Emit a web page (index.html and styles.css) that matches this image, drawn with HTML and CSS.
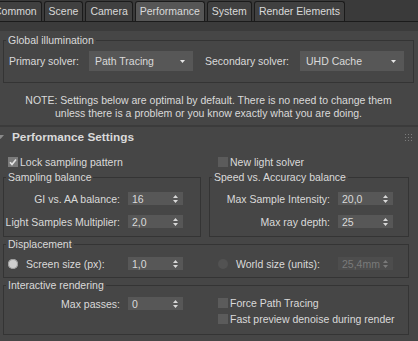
FILE: index.html
```html
<!DOCTYPE html>
<html lang="en">
<head>
  <meta charset="UTF-8" />
  <meta name="viewport" content="width=device-width, initial-scale=1.0"/>
  <title>Render Setup - Performance</title>
  <link rel="stylesheet" href="styles.css">
</head>
<body>
  <div class="tabs">
    <div class="tab">Common</div>
    <div class="tab">Scene</div>
    <div class="tab">Camera</div>
    <div class="tab active">Performance</div>
    <div class="tab">System</div>
    <div class="tab">Render Elements</div>
  </div>

  <div class="panel">
    <div class="rollout top">
      <fieldset class="group gi">
        <legend>Global illumination</legend>
        <div class="solvers">
          <span>Primary solver:</span>
          <div class="dropdown">Path Tracing
            <svg width="5" height="3" viewBox="0 0 5 3"><path d="M0 0h5L2.5 3z" fill="#e6e6e6"/></svg>
          </div>
          <span class="second">Secondary solver:</span>
          <div class="dropdown">UHD Cache
            <svg width="5" height="3" viewBox="0 0 5 3"><path d="M0 0h5L2.5 3z" fill="#e6e6e6"/></svg>
          </div>
        </div>
      </fieldset>
      <p class="note">NOTE: Settings below are optimal by default. There is no need to change them<br>unless there is a problem or you know exactly what you are doing.</p>
    </div>

    <div class="rollout">
      <div class="rollout-head">
        <svg class="caret" width="7" height="4" viewBox="0 0 7 4"><path d="M0 0h7L3.5 4z" fill="#8a8a8a"/></svg>
        <span class="title">Performance Settings</span>
        <svg class="grip" width="7" height="7" viewBox="0 0 7 7" fill="#7c7c7c">
          <rect x="0" y="0" width="1" height="1"/><rect x="3" y="0" width="1" height="1"/><rect x="6" y="0" width="1" height="1"/>
          <rect x="0" y="3" width="1" height="1"/><rect x="3" y="3" width="1" height="1"/><rect x="6" y="3" width="1" height="1"/>
          <rect x="0" y="6" width="1" height="1"/><rect x="3" y="6" width="1" height="1"/><rect x="6" y="6" width="1" height="1"/>
        </svg>
      </div>

      <div class="body">
        <div class="halves checks">
          <label class="check on"><span class="box"><svg width="10" height="10" viewBox="0 0 10 10"><path d="M2 5.2l2 2.2 4-5" fill="none" stroke="#e4e4e4" stroke-width="1.6"/></svg></span>Lock sampling pattern</label>
          <label class="check"><span class="box"></span>New light solver</label>
        </div>

        <div class="pair">
          <fieldset class="group">
            <legend>Sampling balance</legend>
            <div class="fields">
              <span class="lbl">GI vs. AA balance:</span>
              <div class="spinner">16<svg width="5" height="8" viewBox="0 0 5 8"><path d="M0 3L2.5 0 5 3zM0 5h5L2.5 8z" fill="#d8d8d8"/></svg></div>
              <span class="lbl">Light Samples Multiplier:</span>
              <div class="spinner">2,0<svg width="5" height="8" viewBox="0 0 5 8"><path d="M0 3L2.5 0 5 3zM0 5h5L2.5 8z" fill="#d8d8d8"/></svg></div>
            </div>
          </fieldset>
          <fieldset class="group">
            <legend>Speed vs. Accuracy balance</legend>
            <div class="fields wide">
              <span class="lbl">Max Sample Intensity:</span>
              <div class="spinner">20,0<svg width="5" height="8" viewBox="0 0 5 8"><path d="M0 3L2.5 0 5 3zM0 5h5L2.5 8z" fill="#d8d8d8"/></svg></div>
              <span class="lbl">Max ray depth:</span>
              <div class="spinner">25<svg width="5" height="8" viewBox="0 0 5 8"><path d="M0 3L2.5 0 5 3zM0 5h5L2.5 8z" fill="#d8d8d8"/></svg></div>
            </div>
          </fieldset>
        </div>

        <fieldset class="group disp">
          <legend>Displacement</legend>
          <div class="halves">
            <div class="radio-row">
              <label class="radio on"><span class="dot"></span>Screen size (px):</label>
              <div class="spinner">1,0<svg width="5" height="8" viewBox="0 0 5 8"><path d="M0 3L2.5 0 5 3zM0 5h5L2.5 8z" fill="#d8d8d8"/></svg></div>
            </div>
            <div class="radio-row">
              <label class="radio"><span class="dot"></span>World size (units):</label>
              <div class="spinner off">25,4mm<svg width="5" height="8" viewBox="0 0 5 8"><path d="M0 3L2.5 0 5 3zM0 5h5L2.5 8z" fill="#7a7a7a"/></svg></div>
            </div>
          </div>
        </fieldset>

        <fieldset class="group inter">
          <legend>Interactive rendering</legend>
          <div class="halves">
            <div class="fields">
              <span class="lbl">Max passes:</span>
              <div class="spinner">0<svg width="5" height="8" viewBox="0 0 5 8"><path d="M0 3L2.5 0 5 3zM0 5h5L2.5 8z" fill="#d8d8d8"/></svg></div>
            </div>
            <div class="check-list">
              <label class="check"><span class="box"></span>Force Path Tracing</label>
              <label class="check"><span class="box"></span>Fast preview denoise during render</label>
            </div>
          </div>
        </fieldset>
      </div>
    </div>
  </div>
</body>
</html>
```

FILE: styles.css
```css
* { margin: 0; padding: 0; box-sizing: border-box; }
body {
  background: #3b3b3b;
  color: #dadada;
  font-family: "Liberation Sans", Arial, sans-serif;
  font-size: 10.5px;
  width: 418px;
  height: 341px;
  overflow: hidden;
}

/* tab strip */
.tabs {
  display: flex;
  gap: 2px;
  height: 22px;
  padding-top: 1px;
  margin-left: -11px;
  background: #3a3a3a;
  border-bottom: 1px solid #1b1b1b;
}
.tab {
  padding: 0 4px;
  line-height: 19px;
  background: #404040;
  border: 1px solid #1b1b1b;
  border-bottom: none;
  border-radius: 3px 3px 0 0;
  white-space: nowrap;
}
.tab.active { background: #565656; }

/* rollouts */
.panel {
  padding-top: 9px;
  display: flex;
  flex-direction: column;
  gap: 2px;
}
.rollout { background: #464646; }
.rollout.top { padding: 2px 4px 5px 3px; }

.group {
  border: 1px solid #343434;
  margin: 0;
  min-width: 0;
}
legend {
  line-height: 14px;
  padding: 0 2px;
  margin-left: 2px;
}
.group.gi { padding: 4px 0 11px; }
.solvers {
  display: grid;
  grid-template-columns: 80px 104px 107px 104px;
  align-items: center;
  padding-left: 5px;
}
.solvers .second { padding-left: 12px; }
.dropdown {
  height: 20px;
  background: #575757;
  padding: 0 8px 0 6px;
  display: flex;
  align-items: center;
  justify-content: space-between;
}
.note {
  text-align: center;
  line-height: 13px;
  margin-top: 11px;
}

.rollout-head {
  height: 20px;
  display: flex;
  align-items: center;
  padding-right: 6px;
}
.caret { margin-left: -3px; }
.title {
  font-weight: bold;
  font-size: 11.8px;
  margin-left: 8px;
  flex: 1;
}

.body { padding: 7px 9px 10px 3px; }

.halves {
  display: grid;
  grid-template-columns: 210px 1fr;
  align-items: start;
}
.checks { padding-left: 5px; height: 14px; align-items: center; }

.check {
  display: flex;
  align-items: center;
  gap: 2px;
  height: 16px;
}
.box {
  width: 10px;
  height: 10px;
  background: #5b5b5b;
  display: block;
}
.check.on .box { background: #7b7b7b; }
.box svg { display: block; }

.pair {
  display: grid;
  grid-template-columns: 198px 1fr;
  column-gap: 8px;
  margin-top: 2px;
}
.pair .group { padding: 8px 0 8px; }
.fields {
  display: grid;
  grid-template-columns: 116px 55px;
  column-gap: 8px;
  row-gap: 10px;
  align-items: center;
}
.fields.wide { grid-template-columns: 120px 55px; }
.lbl { text-align: right; white-space: nowrap; }

.spinner {
  height: 13px;
  background: #575757;
  padding: 0 5px 0 4px;
  display: flex;
  align-items: center;
  justify-content: space-between;
}
.spinner.off { background: #4d4d4d; color: #7a7a7a; }

.group.disp { padding: 6px 0 7px; }
.radio-row {
  display: grid;
  grid-template-columns: 120px 55px;
  align-items: center;
  padding-left: 4px;
}
.radio {
  display: flex;
  align-items: center;
  gap: 8px;
  white-space: nowrap;
}
.dot {
  width: 10px;
  height: 10px;
  border-radius: 50%;
  background: #525252;
}
.radio.on .dot { background: #cfcfcf; box-shadow: inset 0 0 0 1px #9a9a9a; }

.group.inter { padding: 5px 0 7px; }
.check-list { padding-left: 4px; margin-top: -2px; }
```
